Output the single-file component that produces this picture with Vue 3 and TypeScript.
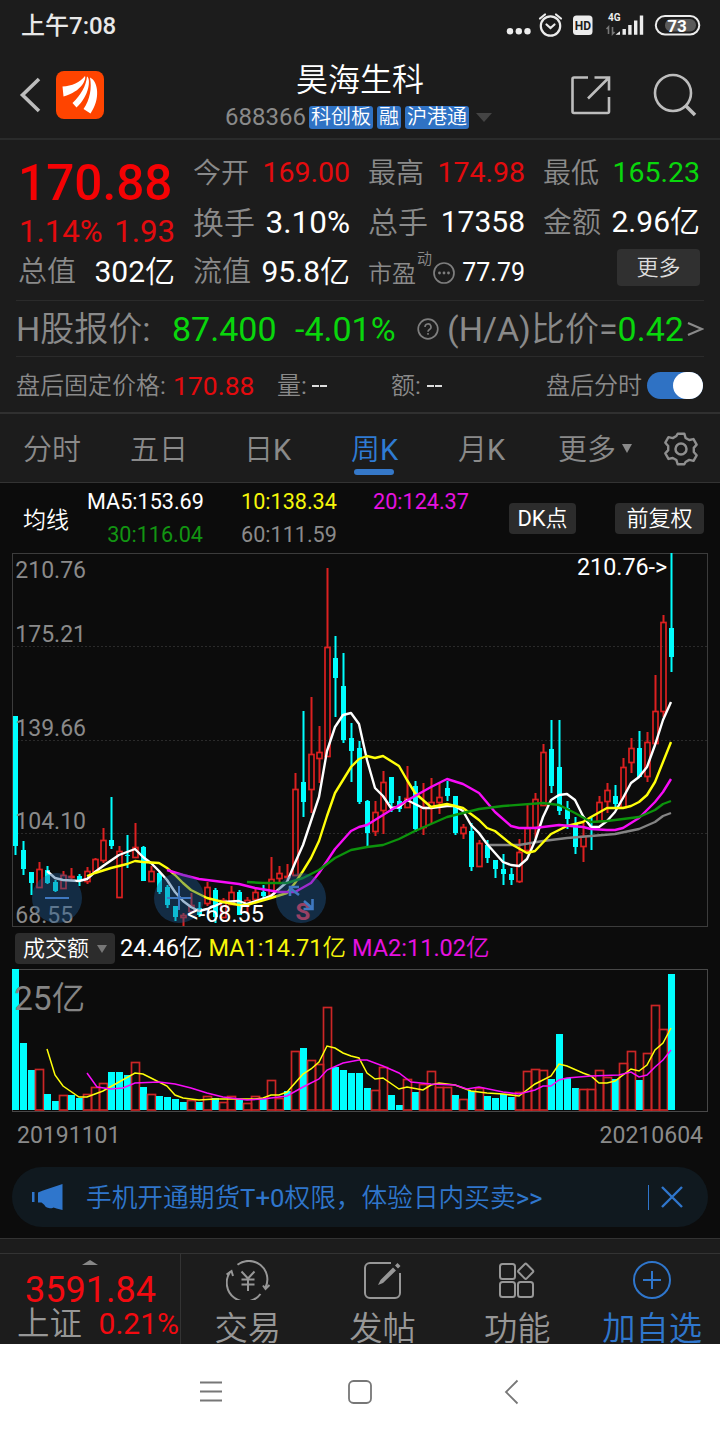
<script setup lang="ts">
type Dir = 'u' | 'd'
// [direction, high, bodyTop, bodyBottom, low] in chart units
const candles: [Dir, number, number, number, number][] = [
  ['d', 716, 716, 846, 855], ['d', 841, 850, 869, 875], ['d', 872, 872, 883, 895], ['u', 862, 869, 888, 888],
  ['d', 866, 870, 883, 884], ['d', 880, 882, 891, 892], ['u', 871, 875, 889, 889], ['u', 868, 876, 877, 880],
  ['d', 874, 876, 881, 886], ['u', 867, 871, 882, 884], ['u', 858, 859, 872, 872], ['u', 828, 840, 861, 863],
  ['d', 797, 840, 846, 849], ['u', 846, 851, 898, 898], ['d', 835, 855, 856, 868], ['u', 823, 847, 858, 858],
  ['d', 846, 847, 881, 881], ['u', 866, 871, 882, 882], ['d', 872, 873, 892, 894], ['d', 885, 887, 905, 908],
  ['d', 906, 906, 917, 921], ['u', 913, 915, 918, 926], ['u', 893, 905, 912, 913], ['d', 902, 908, 915, 917],
  ['u', 882, 887, 904, 906], ['d', 888, 890, 917, 923], ['u', 898, 900, 918, 918], ['u', 886, 892, 905, 905],
  ['d', 890, 892, 915, 915], ['u', 897, 900, 905, 913], ['u', 887, 892, 900, 900], ['d', 885, 892, 896, 900],
  ['u', 857, 879, 895, 895], ['u', 866, 873, 879, 883], ['u', 864, 876, 877, 884], ['u', 773, 789, 876, 876],
  ['d', 711, 782, 802, 817], ['u', 697, 754, 790, 813], ['u', 726, 752, 759, 783], ['u', 568, 647, 757, 757],
  ['d', 636, 658, 678, 717], ['d', 653, 686, 740, 743], ['d', 723, 738, 751, 782], ['d', 741, 748, 802, 804],
  ['d', 800, 801, 833, 846], ['u', 801, 812, 832, 836], ['u', 771, 782, 811, 834], ['d', 777, 777, 803, 812],
  ['d', 796, 801, 809, 812], ['u', 766, 798, 808, 808], ['d', 781, 786, 829, 832], ['u', 783, 807, 828, 835],
  ['u', 778, 802, 808, 824], ['u', 783, 797, 803, 814], ['d', 781, 788, 796, 801], ['d', 796, 796, 833, 835],
  ['u', 824, 827, 834, 839], ['d', 823, 831, 867, 871], ['u', 840, 843, 867, 867], ['d', 840, 845, 858, 863],
  ['d', 860, 860, 869, 878], ['d', 854, 869, 874, 885], ['d', 868, 874, 880, 885], ['u', 839, 852, 882, 883],
  ['u', 805, 828, 851, 852], ['u', 793, 799, 828, 838], ['u', 744, 752, 806, 806], ['d', 720, 749, 786, 793],
  ['d', 720, 767, 811, 815], ['d', 801, 808, 819, 829], ['d', 817, 824, 847, 854], ['u', 823, 836, 847, 862],
  ['d', 817, 828, 829, 850], ['u', 796, 802, 822, 822], ['u', 783, 790, 802, 813], ['d', 785, 796, 804, 809],
  ['u', 758, 767, 808, 808], ['u', 738, 748, 763, 773], ['d', 731, 748, 777, 777], ['u', 732, 742, 777, 782],
  ['u', 675, 711, 744, 744], ['u', 615, 622, 712, 717], ['d', 553, 628, 657, 672],
]
const volumes = ('d969 d1043 d1070 u1069 d1094 d1101 u1095 d1095 d1098 u1094 u1087 u1083 d1072 d1072 d1075 u1062 d1087 ' +
  'u1094 d1096 d1097 d1099 d1102 u1100 d1102 u1096 d1098 u1102 u1096 d1099 u1103 u1096 d1099 u1080 u1098 d1091 ' +
  'u1051 d1048 u1060 u1064 u1007 d1067 d1070 d1073 d1073 d1088 u1090 u1067 d1095 d1105 u1079 d1092 u1084 u1071 ' +
  'u1087 u1087 d1095 u1099 d1091 u1088 d1096 d1098 d1094 d1097 u1092 u1071 u1069 u1070 d1079 d1034 d1078 d1088 ' +
  'u1089 u1089 u1070 u1077 d1079 u1063 u1051 d1080 u1053 u1005 u1029 d974')
  .split(' ').map((v) => ({ up: v[0] === 'u', top: Number(v.slice(1)) }))
const cx = (i: number) => 15.5 + 8 * i

const priceLines = [
  { c: '#848484', p: '487,845 519,845 543,841 567,838 591,836 615,834 639,829 655,822 663,816 671,813' },
  { c: '#fff', p: '47,871 55,878 63,880 79,881 87,879 95,872 103,866 119,855 135,849 143,857 151,863 159,871 167,880 175,892 183,901 191,907 199,911 207,909 215,906 223,902 239,901 247,904 271,896 287,882 295,863 303,845 319,797 327,751 335,727 343,715 351,713 359,724 367,760 375,788 383,796 391,808 399,807 407,800 415,804 423,808 431,808 447,806 455,806 463,811 471,825 479,833 487,844 495,853 503,862 511,865 519,866 527,859 535,841 543,817 551,800 559,795 567,794 575,800 583,816 591,827 599,827 607,821 615,812 623,798 631,783 639,777 647,767 655,745 663,720 671,702' },
  { c: '#ffff0a', p: '87,876 95,873 111,868 127,864 135,861 143,862 159,863 167,868 175,875 183,883 191,890 199,894 207,898 215,900 223,902 239,905 247,905 271,898 287,893 295,883 303,871 311,858 319,841 327,816 335,793 351,767 359,759 367,756 375,758 383,756 399,766 407,780 415,793 431,807 447,804 463,808 479,820 487,828 495,831 511,844 527,853 535,851 551,834 567,826 583,822 591,817 607,808 623,808 631,806 639,802 647,795 655,782 663,762 671,742' },
  { c: '#f80cf8', p: '167,870 183,875 199,879 223,882 239,884 255,888 279,892 295,892 311,883 319,873 335,849 351,831 359,827 367,825 391,810 415,796 431,787 447,779 463,784 479,793 495,812 511,826 519,828 535,828 559,825 583,827 591,829 607,830 615,830 623,828 639,818 655,802 663,792 671,779' },
  { c: '#0c930c', p: '247,882 263,883 287,883 303,878 319,870 335,858 351,850 367,847 383,845 399,839 415,831 431,824 447,817 463,813 479,809 503,806 543,803 559,805 575,813 591,822 607,821 639,817 655,810 663,804 671,801' },
]
const volumeLines = [
  { c: '#ffff0a', p: '47,1049 55,1075 63,1086 79,1097 87,1097 103,1091 119,1082 135,1073 143,1074 151,1078 167,1086 175,1095 183,1098 199,1100 215,1099 231,1099 255,1099 263,1098 271,1095 279,1095 287,1092 303,1074 311,1069 319,1062 327,1046 335,1048 343,1053 351,1056 359,1058 367,1073 375,1079 383,1078 399,1089 407,1087 423,1090 431,1085 439,1083 455,1085 471,1091 487,1093 503,1094 519,1096 535,1084 551,1076 559,1064 567,1066 583,1073 591,1076 599,1083 607,1083 615,1081 631,1069 639,1071 647,1065 655,1050 663,1043 671,1028' },
  { c: '#f80cf8', p: '87,1073 97,1087 111,1089 123,1088 135,1083 159,1082 175,1084 191,1088 207,1093 223,1097 247,1100 263,1099 287,1096 303,1087 319,1079 327,1070 343,1063 359,1060 367,1060 383,1066 399,1073 411,1082 431,1084 455,1085 467,1089 479,1087 503,1092 519,1094 535,1090 543,1086 551,1086 559,1080 567,1078 591,1076 619,1075 631,1072 639,1077 647,1075 655,1067 663,1060 671,1050' },
]
const scale = [
  { t: '210.76', y: 578 }, { t: '175.21', y: 642 }, { t: '139.66', y: 736 }, { t: '104.10', y: 829 }, { t: '68.55', y: 923 },
]
const tabs = [
  { t: '分时', w: 105 }, { t: '五日', w: 109 }, { t: '日K', w: 108 }, { t: '周K', w: 106, on: true }, { t: '月K', w: 108 },
]
</script>

<template>
  <main class="screen">
    <div class="status">
      <span class="clock">上午7:08</span>
      <svg width="200" height="30" viewBox="504 11 200 30">
        <g fill="#ececec"><circle cx="510" cy="31.3" r="3.2" /><circle cx="518.8" cy="31.3" r="3.2" /><circle cx="527.5" cy="31.3" r="3.2" /></g>
        <g fill="none" stroke="#ececec" stroke-width="2.2" stroke-linecap="round">
          <circle cx="550.5" cy="26" r="9.7" /><path d="M546.5 24.5l4 3.5 4-3.5M540 18.500l5-4M561 18.500l-5-4" />
        </g>
        <rect x="573" y="15.5" width="19.5" height="19.5" rx="3.5" fill="#ececec" />
        <text x="582.8" y="29.8" text-anchor="middle" class="hd">HD</text>
        <text x="608" y="20.5" class="net">4G</text>
        <path d="M608.5 34V27l-2 2M612.5 27v7l2-2" stroke="#777" stroke-width="1.6" fill="none" />
        <path d="M615.5 34.7l4.5-3.5v3.5zM622.500 29h3.400v5.700h-3.400zM628.200 25h3.400v9.700h-3.400zM634 20.500h3.400v14.200h-3.400zM639.800 15.500h3.400v19.200h-3.400z" fill="#ececec" />
        <rect x="665" y="19" width="31" height="12.500" rx="6" fill="#5a5a5a" />
        <rect x="655.800" y="16" width="43.500" height="18.500" rx="9.200" fill="none" stroke="#ececec" stroke-width="2" />
        <text x="677" y="31.500" text-anchor="middle" class="batt">73</text>
      </svg>
    </div>

    <header class="head">
      <div class="head-side">
        <svg width="22" height="38" viewBox="0 0 22 38"><path d="M20 3L3.500 19 20 35" fill="none" stroke="#bdbdbd" stroke-width="3.600" /></svg>
        <svg class="logo" width="48" height="48" viewBox="0 0 48 48">
          <rect width="48" height="48" rx="8" fill="#ff4400" />
          <g fill="#fff">
            <path d="M6.500 15.500C16 15 24 11.500 29 5c1.500 3-3 15.500-21.500 20.500z" />
            <path d="M16.500 32C25 24 30 15 31 5.500c4 2 2.500 19.500-10.500 31z" />
            <path d="M27.500 38C34 29 36 17 34 6.500c8.500 4 10.500 22 .5 36z" />
          </g>
        </svg>
      </div>
      <div class="head-mid">
        <h1>昊海生科</h1>
        <div class="code"><span class="num">688366</span><b>科创板</b><b>融</b><b>沪港通</b><i class="caret"></i></div>
      </div>
      <svg class="head-icons" width="132" height="48" viewBox="568 71 132 48">
        <g fill="none" stroke="#bdbdbd" stroke-width="2.600">
          <path d="M588 77.500h-14a1.500 1.500 0 0 0-1.500 1.500v32.500a1.500 1.500 0 0 0 1.500 1.500h33.500a1.500 1.500 0 0 0 1.500-1.500V97M588 98.500l20.500-20.500M594.500 77.500h14.500v13" />
          <circle cx="673" cy="93" r="18" /><path d="M686 106l9 9" stroke-width="3.600" />
        </g>
      </svg>
    </header>

    <section class="quote">
      <div class="col">
        <div class="last">170.88</div>
        <div class="chg"><span>1.14%</span><span>1.93</span></div>
        <div class="cell"><span class="l s29">总值</span><span class="v">302亿</span></div>
      </div>
      <div class="col">
        <div class="cell"><span class="l">今开</span><span class="v p red">169.00</span></div>
        <div class="cell"><span class="l s31">换手</span><span class="v pct">3.10%</span></div>
        <div class="cell"><span class="l s29">流值</span><span class="v">95.8亿</span></div>
      </div>
      <div class="col">
        <div class="cell"><span class="l">最高</span><span class="v p red">174.98</span></div>
        <div class="cell"><span class="l s30">总手</span><span class="v">17358</span></div>
        <div class="cell pe"><span class="l s24">市盈</span><sup>动</sup>
          <svg width="22" height="22" viewBox="0 0 22 22"><circle cx="11" cy="11" r="10" fill="none" stroke="#7e7e7e" stroke-width="1.700" /><g fill="#7e7e7e"><circle cx="6.500" cy="11" r="1.400" /><circle cx="11" cy="11" r="1.400" /><circle cx="15.500" cy="11" r="1.400" /></g></svg>
          <span class="v s25">77.79</span></div>
      </div>
      <div class="col">
        <div class="cell"><span class="l">最低</span><span class="v p green">165.23</span></div>
        <div class="cell"><span class="l s29">金额</span><span class="v">2.96亿</span></div>
        <div class="cell end"><span class="more">更多</span></div>
      </div>
    </section>

    <section class="hshare">
      <span class="grey hl">H股报价:</span><span class="green hp">87.400</span><span class="green hc">-4.01%</span>
      <svg width="22" height="22" viewBox="0 0 22 22"><circle cx="11" cy="11" r="9.800" fill="none" stroke="#7e7e7e" stroke-width="1.700" /><path d="M8 9a3 3 0 1 1 4.500 2.500c-1.200.700-1.500 1-1.500 2.300M11 15v1.800" fill="none" stroke="#7e7e7e" stroke-width="1.600" /></svg>
      <span class="grey ha">(H/A)比价=</span><span class="green">0.42</span>
      <svg class="gt" width="17" height="16" viewBox="0 0 17 16"><path d="M1 2l14 6-14 6" fill="none" stroke="#8a8a8a" stroke-width="2.200" /></svg>
    </section>

    <section class="after">
      <span class="grey a1">盘后固定价格:</span><span class="red a2">170.88</span>
      <span class="grey a3">量:</span><i class="dash"></i>
      <span class="grey a4">额:</span><i class="dash"></i>
      <span class="grey a5">盘后分时</span><span class="toggle"><i></i></span>
    </section>

    <nav class="tabs">
      <span v-for="t in tabs" :key="t.t" class="tab" :class="{ on: t.on }" :style="{ width: t.w + 'px' }">{{ t.t }}</span>
      <span class="tab more-tab">更多<i></i></span>
      <svg width="36" height="36" viewBox="0 0 36 36" fill="none" stroke="#8f8f8f" stroke-width="2.500" stroke-linejoin="round">
        <path d="M14.500 2h7l1.300 4.400 3.800 2.200 4.500-1 3.300 5.800-3 3.400v4.400l3 3.400-3.300 5.800-4.500-1-3.800 2.200L21.500 34h-7l-1.300-4.400-3.800-2.200-4.500 1-3.300-5.800 3-3.400v-2.400v-2l-3-3.400 3.300-5.800 4.500 1 3.800-2.200z" transform="translate(.8 .8) scale(.955)" />
        <circle cx="18" cy="18" r="5.500" />
      </svg>
    </nav>

    <section class="market">
      <div class="ma">
        <span class="ma-title">均线</span>
        <div class="ma-grid">
          <span class="r">MA5:153.69</span><span class="yellow">10:138.34</span><span class="mag">20:124.37</span>
          <span class="r dgreen">30:116.04</span><span class="grey">60:111.59</span>
        </div>
        <span class="btn dk">DK点</span><span class="btn fq">前复权</span>
      </div>

      <svg class="chart" width="720" height="374" viewBox="0 553 720 374">
        <rect x="12.500" y="553.500" width="695" height="373" fill="none" stroke="#3c3c3c" />
        <path d="M13 646.500H707M13 740.500H707M13 833.500H707" stroke="#2b2b2b" stroke-dasharray="2 2" />
        <g v-for="(k, i) in candles" :key="i">
          <template v-if="k[0] === 'd'">
            <rect :x="cx(i) - 1" :y="k[1]" width="2" :height="k[4] - k[1]" fill="#00ffff" />
            <rect :x="cx(i) - 2.500" :y="k[2]" width="5" :height="Math.max(1, k[3] - k[2])" fill="#00ffff" />
          </template>
          <template v-else>
            <path :d="`M${cx(i)} ${k[1]}V${k[2]}M${cx(i)} ${k[3]}V${k[4]}`" stroke="#dc2020" stroke-width="2" />
            <rect :x="cx(i) - 2.500" :y="k[2] + .5" width="5" :height="Math.max(1, k[3] - k[2] - 1)" fill="none" stroke="#dc2020" stroke-width="1.700" />
          </template>
        </g>
        <polyline v-for="l in priceLines" :key="l.c" :points="l.p" fill="none" :stroke="l.c" stroke-width="2.400" stroke-linejoin="round" />
        <g class="scale"><text v-for="s in scale" :key="s.t" x="15.300" :y="s.y">{{ s.t }}</text></g>
        <text class="mark" x="577" y="575">210.76-&gt;</text>
        <text class="sell" x="303" y="920" text-anchor="middle">S</text>
        <g fill="#1f5a94" fill-opacity=".42"><circle cx="57" cy="898" r="25" /><circle cx="179" cy="898" r="25" /><circle cx="301" cy="898" r="25" /></g>
        <text class="mark" x="187" y="922">&lt;-68.55</text>
        <g stroke="#3f78c0" stroke-width="2" fill="none">
          <path d="M45 898h24M167 898h24M179 886v24" />
          <path d="M299 895l-9-7M290 896v-9h9M304 901l8 7M312.500 899v10h-9" stroke-width="2.600" />
        </g>
      </svg>

      <div class="vol-head">
        <span class="btn vol">成交额<i></i></span>
        <span class="n1">24.46亿</span><span class="yellow n2">MA1:14.71亿</span><span class="mag">MA2:11.02亿</span>
      </div>

      <svg class="chart" width="720" height="144" viewBox="0 969 720 144">
        <rect x="12.500" y="969.500" width="695" height="142" fill="none" stroke="#484848" />
        <g v-for="(v, i) in volumes" :key="i">
          <rect v-if="v.up" :x="cx(i) - 4" :y="v.top + .5" width="8" :height="1109.500 - v.top" fill="none" stroke="#cc2626" stroke-width="1.700" />
          <rect v-else :x="cx(i) - 3.500" :y="v.top" width="7" :height="1110 - v.top" fill="#00ffff" />
        </g>
        <polyline v-for="l in volumeLines" :key="l.c" :points="l.p" fill="none" :stroke="l.c" stroke-width="1.500" />
        <text class="vscale" x="14" y="1010">25亿</text>
      </svg>
      <div class="dates"><span>20191101</span><span>20210604</span></div>

      <div class="banner">
        <svg width="31" height="28" viewBox="0 0 31 28" fill="#2f76cc"><path d="M0 9h2.500v10H0zM6 9.500l5-2L30.500 1v26l-6-1.500-3-1c-1 1.500-8 1-9-2.500l-3-2.500H6z" /></svg>
        <span class="ad">手机开通期货T+0权限，体验日内买卖&gt;&gt;</span>
        <i class="bar"></i>
        <svg width="22" height="22" viewBox="0 0 22 22"><path d="M1 1l20 20M21 1L1 21" stroke="#2f76cc" stroke-width="2.400" /></svg>
      </div>
    </section>

    <footer class="foot">
      <div class="index">
        <i class="up"></i>
        <div class="iv">3591.84</div>
        <div class="ir"><span>上证</span><b>0.21%</b></div>
      </div>
      <div class="act">
        <svg width="44" height="40" viewBox="0 0 44 40" fill="none" stroke="#979797" stroke-width="2">
          <path d="M11.500 4.800A18.500 18.500 0 0 1 39.500 27.500M34.500 34A18.500 18.500 0 0 1 4.500 11.500M0.500 14.500l5-3.500 1.500 5M37 25.500l2.500 3.500 4-4" />
          <path d="M15.500 11.500l6.500 7 6.500-7M22 18.500v12.500M15.500 19.500h13M15.500 24.500h13" />
        </svg><span>交易</span>
      </div>
      <div class="act">
        <svg width="44" height="40" viewBox="0 0 44 40" fill="none" stroke="#979797" stroke-width="2">
          <path d="M30 3H9a5 5 0 0 0-5 5v25a5 5 0 0 0 5 5h25a5 5 0 0 0 5-5V13" />
          <path d="M17 25l2.500-5L32 7.500l3 3L22 23zM34 5.500l2.500-2.500 3 3L37 8.500z" fill="#979797" stroke="none" />
        </svg><span>发帖</span>
      </div>
      <div class="act">
        <svg width="44" height="40" viewBox="0 0 44 40" fill="none" stroke="#979797" stroke-width="2">
          <rect x="5" y="4" width="15" height="15" rx="2.500" /><rect x="5" y="22" width="15" height="15" rx="2.500" /><rect x="23" y="22" width="15" height="15" rx="2.500" />
          <rect x="25" y="5.500" width="11.500" height="11.500" rx="1.500" transform="rotate(45 30.700 11.200)" />
        </svg><span>功能</span>
      </div>
      <div class="act blue">
        <svg width="44" height="40" viewBox="0 0 44 40" fill="none" stroke="#2f76cc" stroke-width="2">
          <circle cx="22" cy="20" r="18" /><path d="M13 20h18M22 11v18" />
        </svg><span>加自选</span>
      </div>
    </footer>

    <div class="sys">
      <svg width="24" height="24" viewBox="0 0 24 24"><path d="M1 2.500h22M1 11.500h22M1 20.500h22" stroke="#777" stroke-width="1.800" /></svg>
      <svg width="26" height="26" viewBox="0 0 26 26"><rect x="2" y="2" width="22" height="22" rx="4.500" fill="none" stroke="#777" stroke-width="1.800" /></svg>
      <svg width="15" height="26" viewBox="0 0 15 26"><path d="M13.500 1.500L2 13l11.500 11.500" fill="none" stroke="#777" stroke-width="1.800" /></svg>
    </div>
  </main>
</template>

<style>
body { background: #1c1c1c; }
</style>

<style scoped>
* { box-sizing: border-box; }
.screen { width: 720px; height: 1440px; overflow: hidden; background: #1c1c1c; color: #fff; font-family: Roboto, "Noto Sans CJK SC DemiLight", "Noto Sans CJK SC", sans-serif; line-height: 1; white-space: nowrap; display: flex; flex-direction: column; }
.screen > * { flex: none; }
svg { display: block; flex: none; }
i, b { font-style: normal; font-weight: 400; }
.red { color: #e30b0e; }
.green { color: #09d60c; }
.grey { color: #8a8a8a; }
.yellow { color: #f6f60a; }
.mag { color: #e612e0; }
.dgreen { color: #129512; }

.status { height: 51px; padding: 0 16px 0 21px; display: flex; align-items: center; justify-content: space-between; }
.clock { font-family: Roboto, "Noto Sans CJK SC", sans-serif; font-size: 24px; font-weight: 500; color: #e8e8e8; padding-top: 1px; }
.hd { font: 700 12px Roboto, sans-serif; fill: #1c1c1c; }
.net { font: 700 10px Roboto, sans-serif; fill: #ececec; }
.batt { font: 700 17px Roboto, sans-serif; fill: #fff; }

.head { height: 89px; border-bottom: 2px solid #2a2b2b; display: flex; justify-content: space-between; padding: 0 20px 0 19px; }
.head-side { width: 140px; display: flex; align-items: center; gap: 15px; padding-top: 1px; }
.head-icons { margin-top: 20px; }
.head-mid { display: flex; flex-direction: column; padding-top: 12px; margin-left: 66px; flex: 1; align-items: flex-start; }
h1 { margin: 0 0 0 71px; font-size: 32px; line-height: 34px; font-weight: 400; }
.code { display: flex; align-items: center; height: 24px; margin-top: 8px; gap: 4px; color: #8a8a8a; font-size: 24px; }
.num { margin-right: -1px; }
.code b { height: 23px; line-height: 23px; padding: 0 2px; border-radius: 3px; background: #2f72c4; color: #fff; font-size: 20px; }
.caret { border: 8px solid transparent; border-top: 9px solid #444; border-bottom: 0; margin-left: 3px; }

.quote { height: 160px; padding: 8px 20px 0 19px; display: grid; grid-template-columns: repeat(4, 156px); gap: 0 19px; }
.cell { height: 49.500px; display: flex; align-items: center; justify-content: space-between; }
.l { font-size: 28px; color: #8a8a8a; padding-top: 2px; margin-left: -1px; }
.v { font-size: 30px; }
.p { font-size: 28.500px; }
.pct { font-size: 31.500px; }
.s24 { font-size: 24px; } .s25 { font-size: 25px; } .s29 { font-size: 29px; } .s30 { font-size: 30px; } .s31 { font-size: 31px; }
.last { height: 57px; padding-top: 11px; font-size: 49.500px; font-weight: 500; color: #f50204; margin-left: -1px; }
.chg { height: 42px; padding-top: 11px; font-size: 31.200px; color: #e30b0e; display: flex; justify-content: space-between; }
.pe { padding-top: 2px; }
sup { font-size: 15px; color: #8a8a8a; align-self: flex-start; margin: 3px 0 0; }
.pe svg { margin-right: 6px; }
.end { justify-content: flex-end; }
.more { width: 83px; height: 37px; line-height: 37px; margin-bottom: 9px; text-align: center; border-radius: 4px; background: #303030; color: #ddd; font-size: 22px; }

.hshare { height: 57px; margin: 0 16px; border-top: 1px solid #2b2b2b; border-bottom: 1px solid #2b2b2b; font-size: 34px; display: flex; align-items: center; }
.hl { width: 156px; } .hp { width: 123px; } .hc { width: 122px; }
.ha { margin-left: 8px; }
.gt { margin-left: 3px; }

.after { height: 57px; padding: 1px 17px 0 16px; border-bottom: 2px solid #303030; display: flex; align-items: center; font-size: 24px; }
.after .grey { padding-top: 2px; }
.after .a2 { padding-top: 2px; }
.a1 { width: 157px; } .a2 { width: 104px; font-size: 26.500px; } .a3 { width: 35px; } .a4 { margin-left: 64px; width: 36px; } .a5 { margin-left: auto; margin-right: 5px; }
.dash { width: 15px; height: 2px; margin-top: 2px; background: linear-gradient(90deg, #ddd 7px, transparent 7px 8px, #ddd 8px); }
.toggle { width: 56px; height: 27px; border-radius: 14px; background: #2f72c4; display: flex; justify-content: flex-end; }
.toggle i { width: 30px; height: 27px; border-radius: 14px; background: #fff; }

.tabs { height: 69px; border-bottom: 1px solid #333; display: flex; align-items: center; font-size: 29px; color: #8a8a8a; }
.tab { height: 68px; padding: 4px 1px 0 0; display: flex; align-items: center; justify-content: center; position: relative; }
.tabs svg { margin-top: 2px; }
.on { color: #2f7bd3; }
.on::after { content: ""; position: absolute; left: 32px; bottom: 7px; width: 40px; height: 6px; border-radius: 3px; background: #3578c8; }
.more-tab { width: 119px; gap: 6px; margin-right: 8px; }
.more-tab i { border: 5.500px solid transparent; border-top: 9px solid #8a8a8a; border-bottom: 0; margin-bottom: 4px; }

.market { height: 755px; background: #0c0c0c; }
.ma { height: 70px; padding: 0 16px 0 23px; display: flex; align-items: center; font-size: 22px; }
.ma-title { font-size: 23px; width: 64px; padding-top: 5px; }
.ma-grid { display: grid; grid-template-columns: 116px 94px 96px; gap: 0 38px; font-size: 21.600px; line-height: 33px; padding-bottom: 1px; }
.r { text-align: right; }
.btn { background: #2c2c2c; border-radius: 4px; height: 31px; padding-top: 1px; display: flex; align-items: center; justify-content: center; font-size: 22px; }
.dk { width: 67px; margin-left: 40px; } .fq { width: 89px; margin-left: auto; }
.scale { font-size: 23px; fill: #8a8a8a; }
.mark { font-size: 23.300px; fill: #fff; }
.sell { font-size: 24px; font-weight: 700; fill: #f03044; }
.vscale { font-size: 33.500px; fill: #858585; }
.vol-head { height: 43px; margin-bottom: -1px; padding-left: 15px; display: flex; align-items: center; font-size: 23.500px; }
.vol-head > span:not(.vol) { padding-top: 1px; }
.vol { width: 100px; gap: 8px; margin-right: 5px; }
.vol i { border: 5px solid transparent; border-top: 8px solid #777; border-bottom: 0; }
.n1 { margin-right: 6px; } .n2 { margin-right: 6px; }
.dates { height: 45px; padding: 0 17px; display: flex; align-items: center; justify-content: space-between; font-size: 23px; color: #8a8a8a; }
.banner { margin: 9px 12px 0; height: 60px; padding: 0 25px 0 20px; border-radius: 30px; background: #10191f; color: #2f76cc; display: flex; align-items: center; }
.ad { margin-left: 23px; font-size: 25.700px; padding-top: 3px; }
.bar { margin-left: auto; margin-right: 12px; width: 1px; height: 25px; background: #2f76cc; }

.foot { height: 106px; border-top: 1px solid #333; display: flex; overflow: hidden; padding-top: 14px; }
.foot > * { border-top: 1px solid #333; height: 91px; }
.index { width: 181px; border-right: 1px solid #333; padding-top: 6px; color: #f30a10; }
.up { display: block; width: 0; margin-left: 82px; border: 8px solid transparent; border-bottom: 5px solid #888; border-top: 0; }
.iv { font-size: 36px; margin: 7px 0 0 25px; height: 36px; }
.ir { display: flex; align-items: center; justify-content: space-between; padding: 0 1px 0 17px; height: 32px; }
.ir span { font-size: 32.500px; color: #979797; }
.ir b { font-size: 30px; }
.act { width: 134.750px; padding: 6px 1px 0 0; display: flex; flex-direction: column; align-items: center; color: #979797; font-size: 33.300px; }
.act span { margin-top: 12px; }
.blue { color: #2f76cc; }
.sys { height: 96px; background: #fff; display: flex; align-items: center; padding-left: 199px; }
.sys svg:nth-child(2) { margin-left: 124px; }
.sys svg:nth-child(3) { margin-left: 131px; }
</style>
